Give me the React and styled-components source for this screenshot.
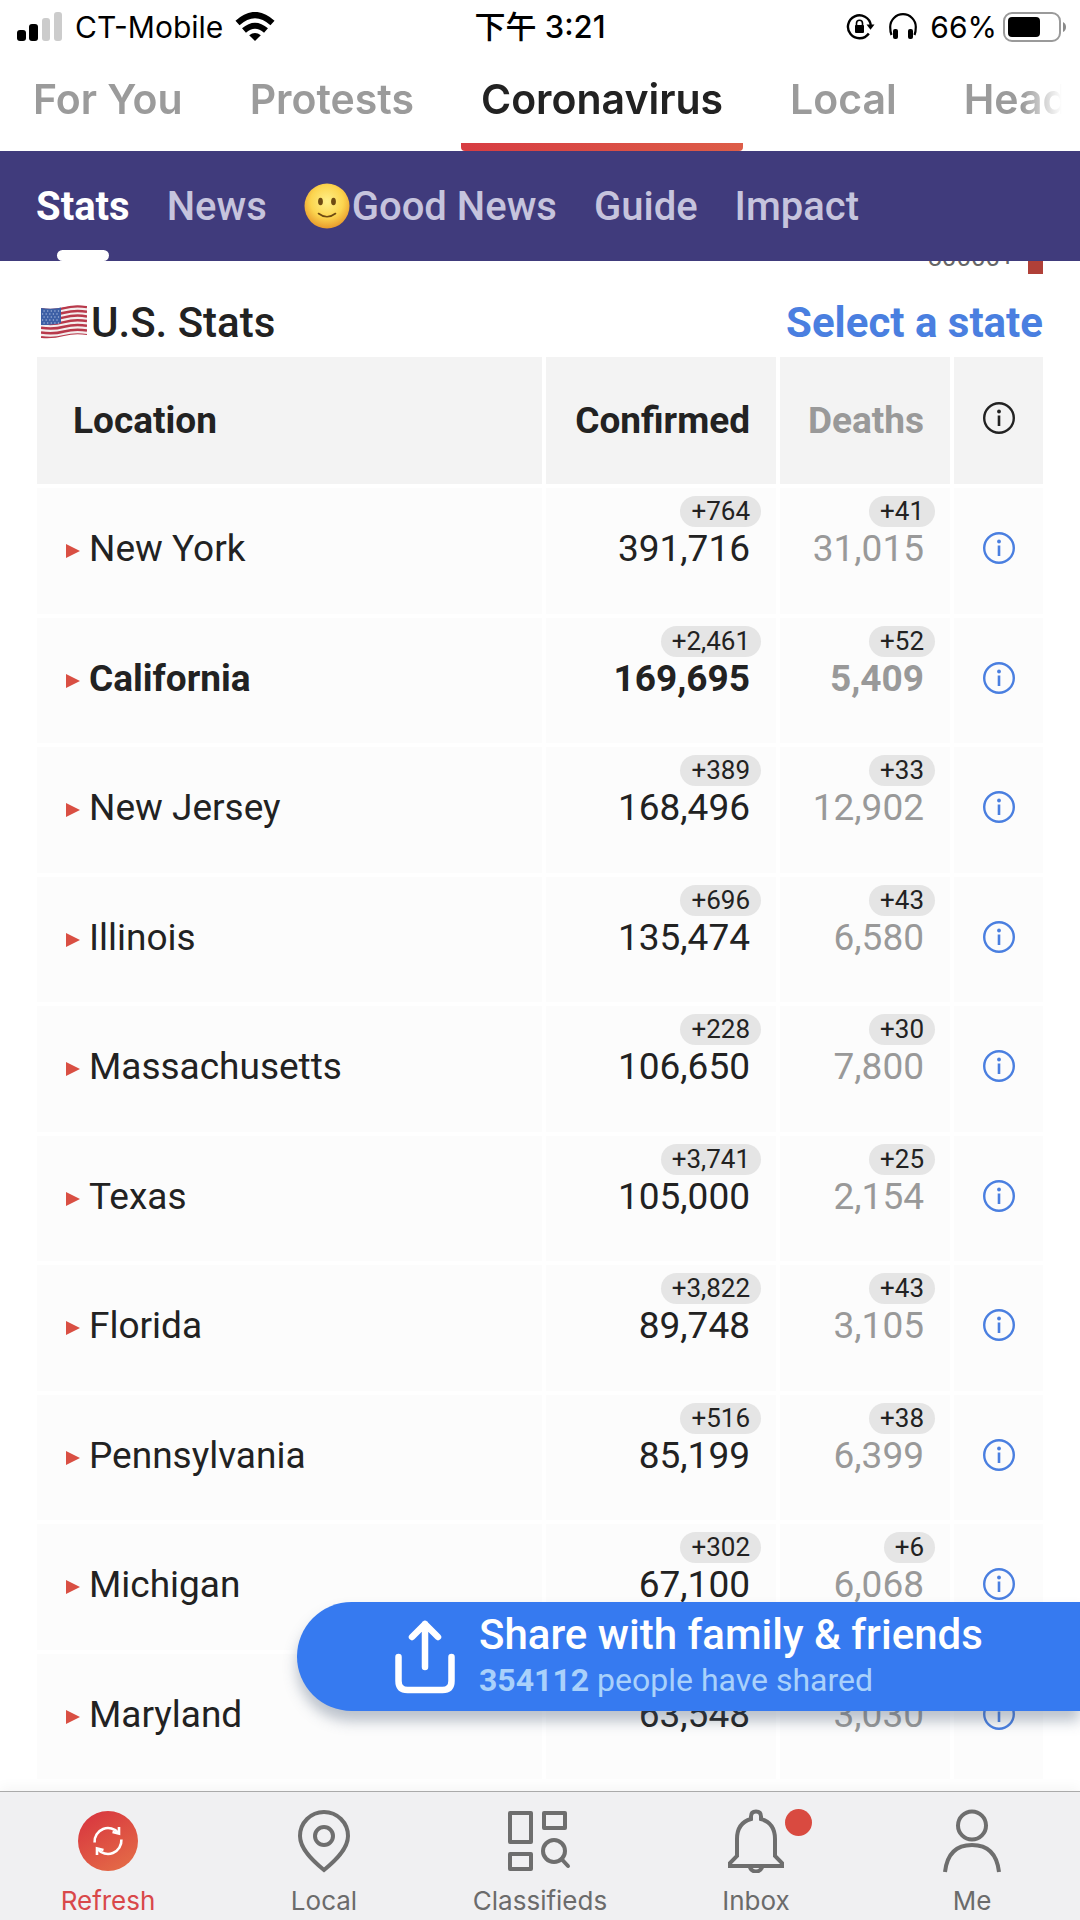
import React from 'react';
import styled, { createGlobalStyle } from 'styled-components';

const rows = [
  ['New York', '391,716', '+764', '31,015', '+41'],
  ['California', '169,695', '+2,461', '5,409', '+52'],
  ['New Jersey', '168,496', '+389', '12,902', '+33'],
  ['Illinois', '135,474', '+696', '6,580', '+43'],
  ['Massachusetts', '106,650', '+228', '7,800', '+30'],
  ['Texas', '105,000', '+3,741', '2,154', '+25'],
  ['Florida', '89,748', '+3,822', '3,105', '+43'],
  ['Pennsylvania', '85,199', '+516', '6,399', '+38'],
  ['Michigan', '67,100', '+302', '6,068', '+6'],
  ['Maryland', '63,548', '', '3,030', ''],
];

const SignalIcon = () => (
  <svg width="46" height="30" viewBox="0 0 46 30">
    <rect x="0" y="18" width="9" height="11" rx="3" fill="#000" />
    <rect x="12" y="12" width="9" height="17" rx="3" fill="#000" />
    <rect x="25" y="6" width="8" height="23" rx="3" fill="#ccc" />
    <rect x="37" y="0" width="8" height="29" rx="3" fill="#ccc" />
  </svg>
);

const WifiIcon = () => (
  <svg width="40" height="30" viewBox="0 0 40 30">
    <g fill="none" stroke="#000" strokeWidth="6">
      <path d="M2.5 11 Q20 -5 37.500 11" />
      <path d="M9 18.500 Q20 9 31 18.500" />
    </g>
    <path d="M20 29 L14.200 23.300 Q20 18.500 25.800 23.300 Z" fill="#000" />
  </svg>
);

const RotationLockIcon = () => (
  <svg width="30" height="28" viewBox="0 0 30 28">
    <path d="M22.800 20.500 A11.500 11.500 0 1 1 24.800 12" fill="none" stroke="#000" strokeWidth="2.400" />
    <path d="M20.500 11.500 H28.500 L24.500 16.800 Z" fill="#000" />
    <rect x="9" y="12" width="9" height="8" rx="1" fill="#000" />
    <path d="M10.500 13 V10.200 a3 3 0 0 1 6 0 V13" fill="none" stroke="#000" strokeWidth="1.600" />
  </svg>
);

const HeadphonesIcon = () => (
  <svg width="28" height="28" viewBox="0 0 28 28">
    <path d="M2.500 22 Q1.200 19 1.200 14 A12.800 12.800 0 0 1 26.800 14 Q26.800 19 25.500 22" fill="none" stroke="#000" strokeWidth="2.200" />
    <rect x="4" y="16" width="5" height="10" rx="2" fill="#000" />
    <rect x="19" y="16" width="5" height="10" rx="2" fill="#000" />
  </svg>
);

const BatteryIcon = () => (
  <svg width="64" height="32" viewBox="0 0 64 32">
    <rect x="1" y="2" width="56" height="28" rx="8" fill="none" stroke="#9a9a9a" strokeWidth="2" />
    <rect x="5" y="6" width="32" height="20" rx="4" fill="#000" />
    <path d="M60 11 Q63 12.500 63 16 Q63 19.500 60 21 Z" fill="#8a8a8a" />
  </svg>
);

const SmileIcon = () => (
  <svg width="46" height="46" viewBox="0 0 46 46">
    <defs>
      <radialGradient id="face" cx="50%" cy="40%" r="60%">
        <stop offset="0" stopColor="#fff08a" />
        <stop offset="0.600" stopColor="#fcd54f" />
        <stop offset="1" stopColor="#e89a2c" />
      </radialGradient>
    </defs>
    <circle cx="23" cy="23" r="22.500" fill="url(#face)" />
    <ellipse cx="16.500" cy="18.500" rx="2.400" ry="3.800" fill="#6e4a12" />
    <ellipse cx="29.500" cy="18.500" rx="2.400" ry="3.800" fill="#6e4a12" />
    <path d="M14.500 30.500 Q23 37 31.500 30.500" fill="none" stroke="#6e4a12" strokeWidth="1.600" strokeLinecap="round" />
  </svg>
);

const FlagIcon = () => (
  <svg width="46" height="34" viewBox="0 0 46 34">
    <defs>
      <clipPath id="wave">
        <path d="M0 3 Q12 5 23 2 T46 1 V30 Q34 28 23 31 T0 33 Z" />
      </clipPath>
    </defs>
    <g clipPath="url(#wave)">
      <rect width="46" height="34" fill="#f4eeee" />
      <g fill="none" stroke="#b8394b" strokeWidth="2.500">
        {[3, 7.700, 12.400, 17.100, 21.800, 26.500, 31.200].map(y => (
          <path key={y} d={`M0 ${y + 1} q12 2 23 -1 t23 -1`} />
        ))}
      </g>
      <path d="M0 0 H20 V18 Q12 20 0 20 Z" fill="#3d5fa5" />
      <g stroke="#c3d0ea" strokeWidth="1.200" strokeDasharray="1.200 2.400">
        {[6, 9, 12, 15, 18].map(y => (
          <path key={y} d={`M${y % 2 ? 1 : 2.500} ${y} H19`} />
        ))}
      </g>
    </g>
  </svg>
);

const InfoIcon = () => (
  <svg width="34" height="34" viewBox="0 0 34 34">
    <circle cx="17" cy="17" r="14.800" fill="none" stroke="currentColor" strokeWidth="2.400" />
    <rect x="15.700" y="14.500" width="2.600" height="10.500" fill="currentColor" />
    <circle cx="17" cy="10.500" r="1.900" fill="currentColor" />
  </svg>
);

const ArrowIcon = () => (
  <svg width="14" height="18" viewBox="0 0 14 18">
    <path d="M0 4 L14 11 L0 18 Z" fill="#d94f43" />
  </svg>
);

const ShareIcon = () => (
  <svg width="60" height="74" viewBox="0 0 60 74" fill="none" stroke="#fff" strokeWidth="6.500" strokeLinecap="round" strokeLinejoin="round">
    <path d="M30 47 V4 M17 17 L30 4 L43 17" />
    <path d="M3.500 37 V61 Q3.500 70 12.500 70 H47.500 Q56.500 70 56.500 61 V37" />
  </svg>
);

const RefreshIcon = () => (
  <svg width="64" height="64" viewBox="0 0 64 64">
    <defs>
      <linearGradient id="hot" x1="0.200" y1="0" x2="0.800" y2="1">
        <stop offset="0" stopColor="#d8363f" />
        <stop offset="1" stopColor="#e46c47" />
      </linearGradient>
    </defs>
    <circle cx="32" cy="32" r="30" fill="url(#hot)" />
    <g fill="none" stroke="#fff" strokeWidth="2.600">
      <path d="M18.600 33.500 A13.500 13.500 0 0 1 42.500 24" />
      <path d="M43 18 V24.500 L36.500 23" />
      <path d="M45.400 30.500 A13.500 13.500 0 0 1 21.500 40" />
      <path d="M21 46 V39.500 L27.500 41" />
    </g>
  </svg>
);

const PinIcon = () => (
  <svg width="64" height="64" viewBox="0 0 64 64" fill="none" stroke="#6e6e6e" strokeWidth="4">
    <path d="M32 61 C21 52 8 40 8 27 A24 24 0 0 1 56 27 C56 40 43 52 32 61 Z" />
    <circle cx="32" cy="27" r="9" />
  </svg>
);

const ClassifiedsIcon = () => (
  <svg width="64" height="64" viewBox="0 0 64 64" fill="none" stroke="#6e6e6e" strokeWidth="4" strokeLinejoin="round">
    <rect x="2" y="4" width="21" height="29" />
    <rect x="2" y="45" width="21" height="15" />
    <rect x="36" y="4" width="21" height="15" />
    <circle cx="46" cy="42" r="11" />
    <path d="M53.500 50 L60 57" strokeLinecap="round" />
  </svg>
);

const BellIcon = () => (
  <svg width="64" height="64" viewBox="0 0 64 64" fill="none" stroke="#6e6e6e" strokeWidth="4">
    <path d="M27 10 V7.500 Q27 2.500 32 2.500 T37 7.500 V10 Q51 14 51 30 V47 L58 54 V57 H6 V54 L13 47 V30 Q13 14 27 10 Z" />
    <path d="M25.500 57 Q27 62.500 32 62.500 T38.500 57" />
  </svg>
);

const PersonIcon = () => (
  <svg width="64" height="64" viewBox="0 0 64 64" fill="none" stroke="#6e6e6e" strokeWidth="4">
    <circle cx="32" cy="16.500" r="14" />
    <path d="M5 63 Q8 36 32 36 T59 63" />
  </svg>
);

const App = () => (
  <Page>
    <GlobalStyle />
    <StatusBar>
      <StatusGroup>
        <SignalIcon />
        <span>CT-Mobile</span>
        <WifiIcon />
      </StatusGroup>
      <Clock>下午 3:21</Clock>
      <StatusGroup $end>
        <RotationLockIcon />
        <HeadphonesIcon />
        <Charge>66%<BatteryIcon /></Charge>
      </StatusGroup>
    </StatusBar>

    <Topics>
      <Topic href="#foryou">For You</Topic>
      <Topic href="#protests">Protests</Topic>
      <Topic href="#coronavirus" $active>Coronavirus</Topic>
      <Topic href="#local">Local</Topic>
      <Topic href="#headlines">Headlines</Topic>
    </Topics>

    <SubNav>
      <SubLink href="#stats" $active>Stats</SubLink>
      <SubLink href="#news">News</SubLink>
      <SubLink href="#good"><SmileIcon />Good News</SubLink>
      <SubLink href="#guide">Guide</SubLink>
      <SubLink href="#impact">Impact</SubLink>
    </SubNav>

    <Content>
      <Legend>
        50000+
        <Swatch />
      </Legend>
      <Heading>
        <Title><FlagIcon />U.S. Stats</Title>
        <StateLink href="#select">Select a state</StateLink>
      </Heading>
      <Table>
        <colgroup>
          <col />
          <NumberCol $width={230} />
          <NumberCol $width={170} />
          <NumberCol $width={89} />
        </colgroup>
        <thead>
          <tr>
            <HeadCell>Location</HeadCell>
            <HeadCell $right>Confirmed</HeadCell>
            <HeadCell $right $muted>Deaths</HeadCell>
            <HeadCell $icon><InfoIcon /></HeadCell>
          </tr>
        </thead>
        <tbody>
          {rows.map(([name, confirmed, newConfirmed, deaths, newDeaths]) => (
            <Row key={name} $bold={name === 'California'}>
              <Cell><Place><ArrowIcon />{name}</Place></Cell>
              <Cell>
                <Figure>
                  {newConfirmed && <Badge>{newConfirmed}</Badge>}
                  <Count>{confirmed}</Count>
                </Figure>
              </Cell>
              <Cell>
                <Figure>
                  {newDeaths && <Badge>{newDeaths}</Badge>}
                  <Count $muted>{deaths}</Count>
                </Figure>
              </Cell>
              <Cell><InfoButton aria-label={`About ${name}`}><InfoIcon /></InfoButton></Cell>
            </Row>
          ))}
        </tbody>
      </Table>
    </Content>

    <ShareButton>
      <ShareIcon />
      <ShareText>
        <ShareTitle>Share with family &amp; friends</ShareTitle>
        <ShareCount><b>354112</b> people have shared</ShareCount>
      </ShareText>
    </ShareButton>

    <TabBar>
      <Tab href="#refresh" $active><RefreshIcon />Refresh</Tab>
      <Tab href="#nearby"><PinIcon />Local</Tab>
      <Tab href="#classifieds"><ClassifiedsIcon />Classifieds</Tab>
      <Tab href="#inbox"><IconWrap><BellIcon /><Dot /></IconWrap>Inbox</Tab>
      <Tab href="#me"><PersonIcon />Me</Tab>
    </TabBar>
  </Page>
);

const GlobalStyle = createGlobalStyle`
  * {
    box-sizing: border-box;
  }
  body {
    margin: 0;
    background: #fff;
    font-family: Roboto, sans-serif;
    color: #222;
  }
  a {
    text-decoration: none;
  }
  svg {
    display: block;
    flex-shrink: 0;
  }
`;

const Page = styled.div`
  position: relative;
  display: flex;
  flex-direction: column;
  height: 100vh;
  overflow: hidden;
`;

const StatusBar = styled.div`
  display: grid;
  grid-template-columns: 1fr auto 1fr;
  align-items: center;
  height: 54px;
  padding: 0 13px 0 17px;
  font: 400 30px/36px Inter, 'Noto Sans CJK TC', sans-serif;
  color: #000;
`;

const StatusGroup = styled.div`
  display: flex;
  align-items: center;
  gap: ${props => props.$end ? '13px' : '12px'};
  justify-content: ${props => props.$end ? 'flex-end' : 'flex-start'};
`;

const Clock = styled.div`
  padding-right: 4px;
  font-size: 31px;
  font-weight: 500;
`;

const Charge = styled.span`
  display: flex;
  align-items: center;
  gap: 6px;
`;

const Topics = styled.nav`
  display: flex;
  gap: 27px;
  height: 97px;
  padding-left: 13px;
  margin-right: 18px;
  overflow: hidden;
  mask-image: linear-gradient(to left, transparent, #000 40px);
`;

const Topic = styled.a`
  flex-shrink: 0;
  padding: 20px 20px 0;
  border-bottom: 8px solid transparent;
  font: 600 41px/50px Inter, sans-serif;
  color: ${props => props.$active ? '#222' : '#9b9b9b'};
  ${props => props.$active && `
    background: linear-gradient(90deg, #d73c42, #dd5d48) bottom / 100% 8px no-repeat border-box;
    border-radius: 4px;
  `}
`;

const SubNav = styled.nav`
  display: flex;
  align-items: center;
  gap: 37px;
  height: 110px;
  flex-shrink: 0;
  padding: 0 36px;
  background: #403b7c;
  z-index: 1;
`;

const SubLink = styled.a`
  position: relative;
  display: flex;
  align-items: center;
  gap: 2px;
  height: 110px;
  font-size: 40px;
  font-weight: ${props => props.$active ? 700 : 500};
  color: ${props => props.$active ? '#fff' : '#c6c4dd'};
  ${props => props.$active && `
    &::after {
      content: '';
      position: absolute;
      left: 50%;
      bottom: 0;
      width: 52px;
      height: 11px;
      margin-left: -26px;
      border-radius: 6px;
      background: #fff;
    }
  `}
`;

const Content = styled.main`
  flex: 1;
  min-height: 0;
  padding: 0 37px;
  overflow: hidden;
`;

const Legend = styled.div`
  display: flex;
  justify-content: flex-end;
  gap: 13px;
  height: 28px;
  margin-top: -14px;
  font-size: 26px;
  line-height: 20px;
  color: #666;
`;

const Swatch = styled.span`
  width: 15px;
  height: 27px;
  background: #b04038;
`;

const Heading = styled.div`
  display: flex;
  align-items: center;
  justify-content: space-between;
  height: 82px;
  padding-top: 12px;
  font-size: 42px;
`;

const Title = styled.h2`
  display: flex;
  align-items: center;
  gap: 4px;
  margin: 0;
  padding-left: 4px;
  font-size: 42px;
  font-weight: 500;
`;

const StateLink = styled.a`
  font-weight: 700;
  color: #4a7fe0;
`;

const Table = styled.table`
  width: calc(100% + 8px);
  margin: -4px;
  table-layout: fixed;
  border-collapse: separate;
  border-spacing: 4px;
  font-size: 37px;
  line-height: 42px;
`;

const NumberCol = styled.col`
  width: ${props => props.$width}px;
`;

const HeadCell = styled.th`
  height: 127px;
  padding: ${props => props.$icon ? '0 28px 6px' : '0 26px 0 0'};
  padding-left: ${props => props.$icon || props.$right ? '' : '36px'};
  background: #f3f3f3;
  font-weight: 700;
  text-align: ${props => props.$right ? 'right' : 'left'};
  color: ${props => props.$muted ? '#999' : '#222'};
`;

const Row = styled.tr`
  height: 126px;
  font-weight: ${props => props.$bold ? 700 : 400};
  &:nth-child(even) {
    height: 125px;
  }
`;

const Cell = styled.td`
  padding: 0;
  background: #fcfcfc;
  vertical-align: top;
`;

const Place = styled.div`
  display: flex;
  align-items: center;
  gap: 9px;
  padding: 40px 0 0 29px;
`;

const Figure = styled.div`
  display: flex;
  flex-direction: column;
  align-items: flex-end;
  justify-content: flex-end;
  height: 82px;
  padding-right: 15px;
`;

const Badge = styled.span`
  margin-bottom: 1px;
  padding: 0 11px;
  border-radius: 16px;
  background: #e5e5e5;
  font-size: 26px;
  font-weight: 400;
  line-height: 31px;
`;

const Count = styled.span`
  padding-right: 11px;
  color: ${props => props.$muted ? '#999' : '#222'};
`;

const InfoButton = styled.button`
  display: block;
  margin: 43px auto 0;
  padding: 0;
  border: 0;
  background: none;
  color: #4a7fe0;
`;

const ShareButton = styled.button`
  position: absolute;
  right: 0;
  bottom: 209px;
  display: flex;
  align-items: center;
  gap: 24px;
  width: 783px;
  height: 109px;
  padding: 0 0 0 98px;
  border: 0;
  border-radius: 55px 0 0 55px;
  background: #367af0;
  box-shadow: 0 10px 14px rgba(60, 80, 110, 0.35);
  font-family: Roboto, sans-serif;
  text-align: left;
`;

const ShareText = styled.span`
  display: flex;
  flex-direction: column;
  padding-bottom: 6px;
`;

const ShareTitle = styled.span`
  font-size: 42px;
  font-weight: 500;
  line-height: 52px;
  color: #fff;
`;

const ShareCount = styled.span`
  font-size: 32px;
  line-height: 38px;
  color: #a9d1fb;
`;

const TabBar = styled.nav`
  display: grid;
  grid-template-columns: repeat(5, 1fr);
  flex-shrink: 0;
  height: 129px;
  padding-top: 17px;
  border-top: 1px solid #aaa;
  background: #f0f0f2;
  box-shadow: 0 -4px 12px rgba(0, 0, 0, 0.04);
  z-index: 1;
`;

const Tab = styled.a`
  display: flex;
  flex-direction: column;
  align-items: center;
  gap: 12px;
  font: 400 26px/32px Inter, sans-serif;
  color: ${props => props.$active ? '#d9484a' : '#6b6b6b'};
`;

const IconWrap = styled.span`
  position: relative;
`;

const Dot = styled.span`
  position: absolute;
  top: 0;
  right: -24px;
  width: 27px;
  height: 27px;
  border-radius: 50%;
  background: #d94a40;
`;

export default App;
